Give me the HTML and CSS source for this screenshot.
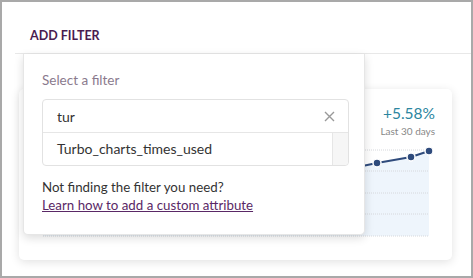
FILE: index.html
```html
<!DOCTYPE html>
<html lang="en">
<head>
    <meta charset="UTF-8">
    <meta name="viewport" content="width=device-width, initial-scale=1.0">
    <title>Add Filter</title>
    <link rel="stylesheet" href="styles.css">
</head>
<body>
    <div class="frame">
        <div class="header">
            <h2>Add Filter</h2>
        </div>
        <div class="content">
            <div class="chart-card">
                <div class="stats">
                    <div class="change">+5.58%</div>
                    <div class="period">Last 30 days</div>
                </div>
                <svg class="chart" width="392" height="98" viewBox="0 0 392 98">
                    <polygon class="area" points="0,62 60,54 120,50 180,44 240,38 300,30 334,23 368,17 386,11 386,96 0,96"></polygon>
                    <line class="grid" x1="0" y1="10" x2="386" y2="10"></line>
                    <line class="grid" x1="0" y1="31" x2="386" y2="31"></line>
                    <line class="grid" x1="0" y1="53" x2="386" y2="53"></line>
                    <line class="grid" x1="0" y1="74" x2="386" y2="74"></line>
                    <line class="grid" x1="0" y1="96" x2="386" y2="96"></line>
                    <polyline class="trend" points="0,62 60,54 120,50 180,44 240,38 300,30 334,23 368,17 386,11"></polyline>
                    <circle class="dot" cx="300" cy="30" r="4"></circle>
                    <circle class="dot" cx="334" cy="23" r="4"></circle>
                    <circle class="dot" cx="368" cy="17" r="4"></circle>
                    <circle class="dot" cx="386" cy="11" r="4"></circle>
                </svg>
            </div>

            <div class="filter-popover">
                <label class="filter-label" for="filterSearch">Select a filter</label>
                <div class="filter-box">
                    <div class="search-row">
                        <input type="text" id="filterSearch" value="tur">
                        <svg class="clear" width="11" height="11" viewBox="0 0 11 11">
                            <path d="M1 1 L10 10 M10 1 L1 10"></path>
                        </svg>
                    </div>
                    <div class="results">
                        <div class="result-item">Turbo_charts_times_used</div>
                        <div class="scroll-track"></div>
                    </div>
                </div>
                <p class="help">Not finding the filter you need?<br>
                    <a href="#">Learn how to add a custom attribute</a></p>
            </div>
        </div>
    </div>
</body>
</html>
```

FILE: styles.css
```css
* {
    box-sizing: border-box;
}
body {
    margin: 0;
    font-family: 'Lato', 'Open Sans', Arial, sans-serif;
    background-color: #fff;
}
.frame {
    width: 473px;
    height: 278px;
    border: 2px solid #a9a9a9;
    background-color: #fff;
    overflow: hidden;
}
.header {
    margin-left: 13px;
    padding: 25px 0 8px 15px;
    border-bottom: 1px solid #e8e8e8;
}
.header h2 {
    margin: 0;
    font-size: 12.5px;
    line-height: 18px;
    font-weight: 700;
    text-transform: uppercase;
    color: #4a1c50;
}
.content {
    position: relative;
    padding: 35px 19px 17px 17px;
}
.chart-card {
    height: 171px;
    border-radius: 5px;
    background-color: #fff;
    box-shadow: 0 2px 10px rgba(0, 0, 0, 0.12);
    padding: 14px 17px 0 24px;
}
.stats {
    display: flex;
    flex-direction: column;
    align-items: flex-end;
}
.stats .change {
    font-size: 15.5px;
    line-height: 20px;
    color: #2b86a0;
}
.stats .period {
    margin-top: 1px;
    font-size: 10px;
    line-height: 14px;
    color: #888;
}
.chart {
    display: block;
    margin-top: 2px;
    overflow: visible;
}
.chart .area {
    fill: #eef5fc;
}
.chart .grid {
    stroke: #d6d8dc;
    stroke-width: 1;
    stroke-dasharray: 1 1;
}
.chart .trend {
    fill: none;
    stroke: #2f4b7c;
    stroke-width: 2;
}
.chart .dot {
    fill: #2f4b7c;
    stroke: #fff;
    stroke-width: 1.5;
}
.filter-popover {
    position: absolute;
    left: 21px;
    top: 0;
    width: 342px;
    height: 181px;
    background-color: #fff;
    border: 1px solid #e6e6e6;
    border-top: none;
    border-radius: 0 0 5px 5px;
    box-shadow: 0 3px 10px rgba(0, 0, 0, 0.14);
    padding: 16px 15px 0 18px;
}
.filter-label {
    display: block;
    font-size: 13.5px;
    line-height: 20px;
    color: #8a7a8d;
}
.filter-box {
    margin-top: 9px;
    border: 1px solid #e2e2e2;
    border-radius: 4px;
}
.search-row {
    display: flex;
    align-items: center;
    height: 33px;
    border-bottom: 1px solid #e6e6e6;
    padding: 0 13px 0 14px;
}
.search-row input {
    flex: 1;
    border: none;
    outline: none;
    padding: 0;
    font-family: inherit;
    font-size: 14px;
    color: #333;
    background: transparent;
}
.clear path {
    stroke: #999;
    stroke-width: 1.4;
    fill: none;
}
.results {
    display: flex;
    height: 32px;
}
.result-item {
    flex: 1;
    padding-left: 14px;
    font-size: 14px;
    line-height: 32px;
    color: #333;
}
.scroll-track {
    width: 16px;
    background-color: #f6f6f6;
    border-left: 1px solid #e6e6e6;
    border-radius: 0 0 4px 0;
}
.help {
    margin: 12px 0 0;
    font-size: 13.3px;
    line-height: 18px;
    color: #333;
}
.help a {
    color: #5a2866;
    text-decoration: underline;
}
```
